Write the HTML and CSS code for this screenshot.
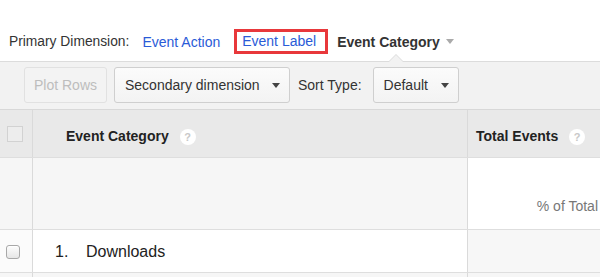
FILE: index.html
```html
<!DOCTYPE html>
<html>
<head>
<meta charset="utf-8">
<link rel="stylesheet" href="styles.css">
</head>
<body>
<div class="dims">
  <span class="dims-label">Primary Dimension:</span>
  <a class="dim-link">Event Action</a>
  <a class="dim-link dim-boxed">Event Label</a>
  <span class="dim-current">Event Category<span class="caret caret-light"></span></span>
</div>
<div class="toolbar">
  <button class="btn btn-disabled">Plot Rows</button>
  <button class="btn btn-secondary">Secondary dimension<span class="caret"></span></button>
  <span class="sort-label">Sort Type:</span>
  <button class="btn btn-sort">Default<span class="caret"></span></button>
</div>
<div class="grid">
  <div class="row row-head">
    <div class="cell cell-check"><span class="head-check"></span></div>
    <div class="cell cell-dim">Event Category<span class="help">?</span></div>
    <div class="cell cell-metric">Total Events<span class="help">?</span></div>
  </div>
  <div class="row row-summary">
    <div class="cell cell-check"></div>
    <div class="cell cell-dim"></div>
    <div class="cell cell-metric"><span class="pct">% of Total</span></div>
  </div>
  <div class="row row-data">
    <div class="cell cell-check"><span class="row-check"></span></div>
    <div class="cell cell-dim"><span class="idx">1.</span><span class="name">Downloads</span></div>
    <div class="cell cell-metric"></div>
  </div>
  <div class="row row-next">
    <div class="cell cell-check"></div>
    <div class="cell cell-dim"></div>
    <div class="cell cell-metric"></div>
  </div>
</div>
</body>
</html>
```
FILE: styles.css
```css
* { box-sizing: border-box; }
html, body {
  margin: 0;
  padding: 0;
  background: #fff;
  font-family: "Liberation Sans", Arial, sans-serif;
  color: #333;
  overflow: hidden;
}

.dims {
  display: flex;
  align-items: center;
  height: 24px;
  margin-top: 29px;
  padding-left: 9px;
}
.dims-label {
  font-size: 13.8px;
  color: #333;
  margin-right: 13px;
  padding-top: 1px;
}
.dim-link {
  font-size: 14px;
  color: #2a5bd7;
  margin-right: 14px;
  padding-top: 1px;
}
.dim-boxed {
  height: 25px;
  display: flex;
  align-items: center;
  border: 3px solid #e8383b;
  padding: 0 9px 0 5px;
  margin-right: 9px;
}
.dim-current {
  position: relative;
  z-index: 2;
  height: 24px;
  display: flex;
  align-items: center;
  font-size: 14px;
  font-weight: bold;
  color: #333;
  padding-top: 1px;
}
.dim-current::before,
.dim-current::after {
  content: "";
  position: absolute;
  left: 50%;
  width: 0;
  height: 0;
  border-left: 7px solid transparent;
  border-right: 7px solid transparent;
}
.dim-current::before {
  top: 25px;
  margin-left: -7px;
  border-bottom: 7px solid #dcdcdc;
}
.dim-current::after {
  top: 26px;
  margin-left: -7px;
  border-bottom: 7px solid #f2f2f2;
}

.caret {
  display: inline-block;
  width: 0;
  height: 0;
  border-left: 4px solid transparent;
  border-right: 4px solid transparent;
  border-top: 5px solid #444;
  margin-left: 14px;
}
.caret-light {
  border-top-color: #aaa;
  margin-left: 6px;
}

.toolbar {
  display: flex;
  align-items: center;
  margin-top: 8px;
  border-top: 1px solid #dcdcdc;
  background: #f2f2f2;
  height: 48px;
  padding: 5px 0 6px 24px;
}
.btn {
  display: flex;
  align-items: center;
  height: 36px;
  font-family: "Liberation Sans", Arial, sans-serif;
  font-size: 14px;
  color: #333;
  border: 1px solid #cfcfcf;
  border-radius: 3px;
  background: linear-gradient(#fbfbfb, #f3f3f3);
  padding: 0 9px 0 10px;
  margin: 0;
}
.btn-disabled {
  color: #bdbdbd;
  border-color: #e1e1e1;
  background: #f3f3f3;
  width: 83px;
  justify-content: center;
  padding: 0;
}
.btn-secondary {
  margin-left: 7px;
  width: 176px;
}
.btn-sort {
  width: 86px;
}
.btn-secondary .caret, .btn-sort .caret { margin-left: auto; }
.sort-label {
  font-size: 14px;
  color: #333;
  margin: 0 11px 0 8px;
}

.grid {
  border-top: 1px solid #d8d8d8;
}
.row {
  display: flex;
  border-bottom: 1px solid #dedede;
}
.cell {
  display: flex;
  align-items: center;
  border-right: 1px solid #dadada;
}
.cell-check {
  width: 33px;
  flex: none;
}
.cell-dim {
  width: 435px;
  flex: none;
}
.cell-metric {
  flex: 1;
  border-right: none;
}

.row-head {
  height: 48px;
  background: #e9e9e9;
  font-size: 14px;
  font-weight: bold;
  color: #222;
}
.row-head .cell { padding-top: 5px; }
.row-head .cell-check { padding-top: 0; padding-left: 7px; }
.row-head .cell-dim { padding-left: 33px; }
.row-head .cell-metric { padding-left: 8px; }
.head-check {
  width: 16px;
  height: 16px;
  border: 1px solid #d2d2d2;
  background: #ededed;
}
.help {
  display: inline-flex;
  align-items: center;
  justify-content: center;
  width: 16px;
  height: 16px;
  border-radius: 50%;
  background: #fff;
  color: #c8c8c8;
  font-size: 11px;
  font-weight: bold;
  margin-left: 11px;
  margin-top: 2px;
}

.row-summary {
  height: 72px;
  background: #f6f6f6;
}
.row-summary .cell-metric {
  background: #fff;
  justify-content: flex-end;
  align-items: flex-end;
  padding: 0 2px 15px 0;
}
.pct {
  font-size: 14px;
  color: #777;
}

.row-data {
  height: 43px;
  background: #fff;
}
.row-data .cell { padding-top: 1px; }
.row-data .cell-check { padding-left: 6px; background: #fbfbfb; }
.row-data .cell-metric { background: #f7f7f7; }
.row-check {
  width: 14px;
  height: 14px;
  border-radius: 3px;
  border: 1px solid #a8a8a8;
  background: linear-gradient(#fdfdfd, #e6e6e6);
  box-shadow: inset 0 1px 0 #fff;
}
.row-data .cell-dim {
  padding-left: 22px;
  font-size: 16px;
  color: #222;
}
.idx { width: 31px; }

.row-next {
  height: 10px;
  background: #f6f6f6;
}
```
